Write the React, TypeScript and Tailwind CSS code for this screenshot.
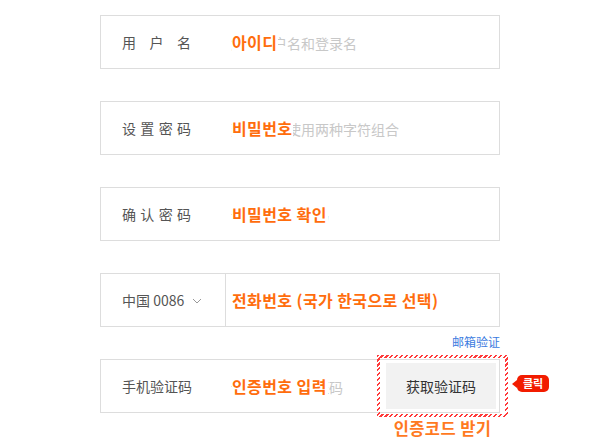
import React from 'react';

const CN = "font-['Noto_Sans_CJK_SC',sans-serif]";
const KR = "font-['Noto_Sans_CJK_KR',sans-serif]";
const NOTE = `absolute top-1/2 -translate-y-1/2 whitespace-nowrap bg-white pr-[1px] text-[16px] font-bold leading-[20px] tracking-[0.4px] text-[#ff6d0d] ${KR}`;

function Label({ text }: { text: string }) {
  return (
    <div className="w-[130px] shrink-0 pl-[21px]">
      <div className="flex w-[69px] justify-between text-[14px] text-[#555]">
        {text.split('').map((c, i) => (
          <span key={i}>{c}</span>
        ))}
      </div>
    </div>
  );
}

function Field({ label, placeholder, note }: { label: string; placeholder: string; note: string }) {
  return (
    <div className="flex h-[54px] items-center border border-[#ddd] bg-white">
      <Label text={label} />
      <div className="relative flex-1">
        <span className="text-[14px] text-[#c8c8c8]">{placeholder}</span>
        <span className={`${NOTE} left-[1px]`}>{note}</span>
      </div>
    </div>
  );
}

function Stripe({ className }: { className: string }) {
  return (
    <div
      className={`absolute bg-[repeating-linear-gradient(135deg,#ff3b3b_0_1.5px,transparent_1.5px_3.5px)] ${className}`}
    />
  );
}

export default function App() {
  return (
    <div className={`min-h-[444px] w-[600px] bg-white pt-[15px] ${CN}`}>
      <div className="ml-[100px] flex w-[400px] flex-col gap-[32px]">
        <Field label="用户名" placeholder="您的账户名和登录名" note="아이디" />
        <Field label="设置密码" placeholder="建议至少使用两种字符组合" note="비밀번호" />
        <Field label="确认密码" placeholder="请再次输入密码" note="비밀번호 확인" />

        <div className="relative">
          <div className="flex h-[54px] items-center border border-[#ddd] bg-white">
            <div className="flex h-full w-[125px] shrink-0 items-center border-r border-[#ddd] pl-[21px] text-[14px] text-[#555]">
              中国 0086
              <svg className="ml-[8px] mt-[1px]" width="10" height="6" viewBox="0 0 10 6" fill="none">
                <path d="M1 1l4 4 4-4" stroke="#999" strokeWidth="1" />
              </svg>
            </div>
            <div className="relative flex-1 pl-[6px]">
              <span className="text-[14px] text-[#c8c8c8]">建议使用常用手机</span>
              <span className={`${NOTE} left-[6px]`}>전화번호 (국가 한국으로 선택)</span>
            </div>
          </div>
          <div className="absolute right-0 top-[62px] text-[12px] leading-[14px] text-[#3c7be0]">邮箱验证</div>
        </div>

        <div className="relative flex h-[54px] items-center border border-[#ddd] bg-white">
          <Label text="手机验证码" />
          <div className="relative flex-1">
            <span className="text-[14px] text-[#c8c8c8]">请输入手机验证码</span>
            <span className={`${NOTE} left-[1px]`}>인증번호 입력</span>
          </div>
          <div className="mr-[3px] flex h-[46px] w-[110px] shrink-0 items-center justify-center bg-[#f2f2f2] text-[14px] text-[#333]">
            获取验证码
          </div>

          <div className="absolute left-[276px] top-[-5px] h-[62px] w-[131px]">
            <Stripe className="left-0 top-0 h-[3px] w-full" />
            <Stripe className="bottom-0 left-0 h-[3px] w-full" />
            <Stripe className="left-0 top-0 h-full w-[3px]" />
            <Stripe className="right-0 top-0 h-full w-[3px]" />
            <div className={`absolute left-0 top-[63px] w-full whitespace-nowrap text-center text-[16.5px] font-bold leading-[20px] tracking-[0.4px] text-[#ff7a1f] ${KR}`}>
              인증코드 받기
            </div>
          </div>

          <div className="absolute left-[411px] top-[15px] flex w-[50px] items-center">
            <div className="h-0 w-0 shrink-0 border-y-[4px] border-r-[5px] border-y-transparent border-r-[#f21c00]" />
            <div className={`flex h-[17px] shrink-0 items-center whitespace-nowrap rounded-[5px] bg-[#f21c00] px-[6px] text-[11px] font-bold text-white ${KR}`}>
              클릭
            </div>
          </div>
        </div>
      </div>
    </div>
  );
}
